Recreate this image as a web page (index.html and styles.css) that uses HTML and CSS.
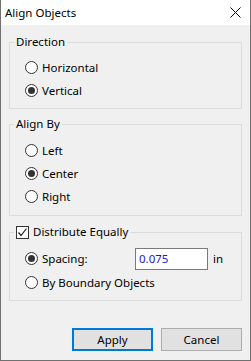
FILE: index.html
```html
<!DOCTYPE html>
<html lang="en">
<head>
  <meta charset="UTF-8" />
  <title>Align Objects</title>
  <link rel="stylesheet" href="styles.css">
</head>
<body>
<div class="window">
  <div class="titlebar">
    <span class="title">Align Objects</span>
    <svg class="close" width="11" height="11" viewBox="0 0 11 11">
      <path d="M0.5 0.5 L10.5 10.5 M10.5 0.5 L0.5 10.5" stroke="#000" stroke-width="1" fill="none"/>
    </svg>
  </div>

  <div class="content">
    <fieldset class="group group-direction">
      <legend>Direction</legend>
      <div class="option"><span class="radio"></span>Horizontal</div>
      <div class="option"><span class="radio checked"></span>Vertical</div>
    </fieldset>

    <fieldset class="group group-align">
      <legend>Align By</legend>
      <div class="option"><span class="radio"></span>Left</div>
      <div class="option"><span class="radio checked"></span>Center</div>
      <div class="option"><span class="radio"></span>Right</div>
    </fieldset>

    <fieldset class="group group-distribute">
      <legend>
        <span class="checkbox">
          <svg width="11" height="11" viewBox="0 0 11 11">
            <path d="M1.5 5.5 L4 8.5 L9.5 1.5" stroke="#222" stroke-width="1.2" fill="none"/>
          </svg>
        </span>
        Distribute Equally
      </legend>
      <div class="option spacing-row">
        <span class="radio checked"></span>
        <span class="spacing-label">Spacing:</span>
        <span class="field">0.075</span>
        <span class="unit">in</span>
      </div>
      <div class="option"><span class="radio"></span>By Boundary Objects</div>
    </fieldset>

    <div class="buttons">
      <button class="btn btn-default">Apply</button>
      <button class="btn">Cancel</button>
    </div>
  </div>
</div>
</body>
</html>
```

FILE: styles.css
```css
* { box-sizing: border-box; }
body { margin: 0; font-family: "Noto Sans", sans-serif; font-size: 11.5px; color: #000; }
.window { width: 251px; height: 361px; border: 1px solid #707070; border-top: none; background: #f0f0f0; display: flex; flex-direction: column; }
.titlebar { height: 25px; flex: none; background: #fff; display: flex; align-items: center; justify-content: space-between; padding: 0 9px 0 4px; }
.title { font-size: 11.5px; }
.close { display: block; }
.content { flex: 1; display: flex; flex-direction: column; padding: 9px 8px 9px; }

.group { margin: 0; border: 1px solid #dcdcdc; padding: 6px 6px 6px 15px; min-width: 0; }
.group legend { padding: 0 2px; margin-left: -11px; line-height: 16px; display: flex; align-items: center; gap: 4px; }
.group-align { margin-top: 7px; padding-top: 7px; padding-bottom: 7px; }
.group-distribute { margin-top: 8px; padding-bottom: 6px; }

.option { display: flex; align-items: center; gap: 4px; height: 23px; }
.spacing-row { height: 25px; }
.radio { width: 13px; height: 13px; flex: none; border: 1px solid #333; border-radius: 50%; background: #fff; display: flex; align-items: center; justify-content: center; }
.radio.checked::after { content: ""; width: 7px; height: 7px; border-radius: 50%; background: #333; }
.checkbox { width: 13px; height: 13px; flex: none; border: 1px solid #333; background: #fff; display: flex; align-items: center; justify-content: center; }
.checkbox svg { display: block; }

.spacing-label { width: 89px; }
.field { width: 73px; height: 22px; border: 1px solid #7a7a7a; background: #fff; color: #1a1ad6; padding: 0 3px; line-height: 20px; }
.unit { margin-left: 1px; }

.buttons { margin-top: auto; display: flex; justify-content: flex-end; gap: 8px; }
.btn { width: 81px; height: 23px; padding: 0; border: 1px solid #adadad; background: #e1e1e1; font: inherit; color: #000; }
.btn-default { border: 2px solid #0078d7; }
```
